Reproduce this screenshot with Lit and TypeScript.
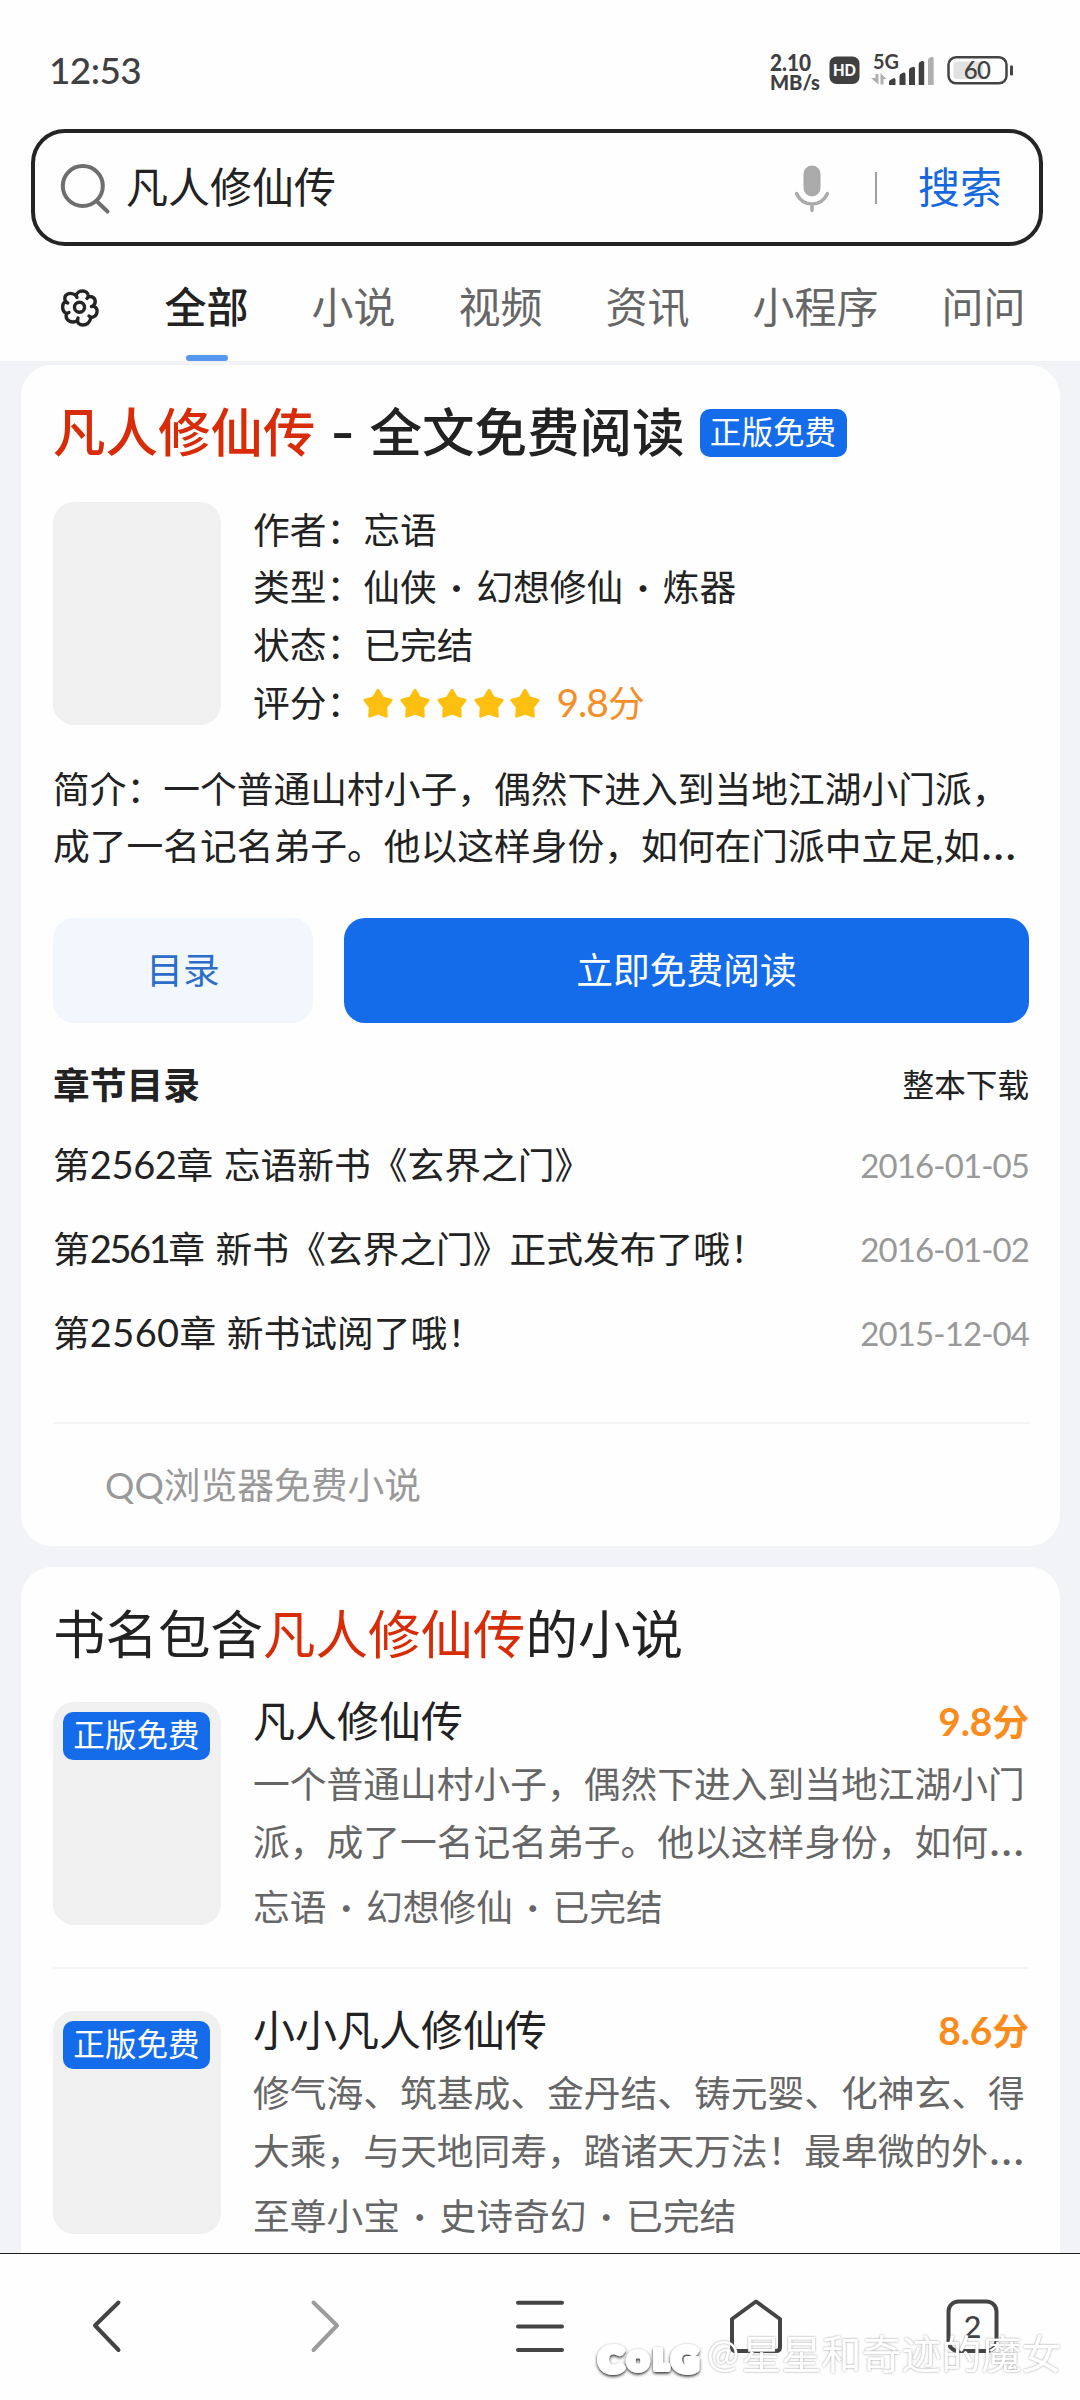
import { LitElement, html, svg, css } from "lit";
import { customElement, property } from "lit/decorators.js";

interface Chapter {
  no: string;
  tracking: number;
  title: string;
  date: string;
}

interface Book {
  title: string;
  score: string;
  lines: [string, string];
  meta: string[];
}

const tabs = ["全部", "小说", "视频", "资讯", "小程序", "问问"];

const chapters: Chapter[] = [
  { no: "2562", tracking: -0.35, title: "忘语新书《玄界之门》", date: "2016-01-05" },
  { no: "2561", tracking: -2.4, title: "新书《玄界之门》正式发布了哦！", date: "2016-01-02" },
  { no: "2560", tracking: 0.4, title: "新书试阅了哦！", date: "2015-12-04" },
];

const books: Book[] = [
  {
    title: "凡人修仙传",
    score: "9.8",
    lines: ["一个普通山村小子，偶然下进入到当地江湖小门", "派，成了一名记名弟子。他以这样身份，如何"],
    meta: ["忘语", "幻想修仙", "已完结"],
  },
  {
    title: "小小凡人修仙传",
    score: "8.6",
    lines: ["修气海、筑基成、金丹结、铸元婴、化神玄、得", "大乘，与天地同寿，踏诸天万法！最卑微的外"],
    meta: ["至尊小宝", "史诗奇幻", "已完结"],
  },
];

@customElement("free-badge")
export class FreeBadge extends LitElement {
  static styles = css`
    :host {
      display: block;
      box-sizing: border-box;
      width: 147px;
      height: 48px;
      border-radius: 10px;
      background: #146cea;
      color: #fff;
      font-size: 31.6px;
      font-weight: 400;
      line-height: 46px;
      text-align: center;
      white-space: nowrap;
    }
  `;
  render() {
    return html`正版免费`;
  }
}

@customElement("dotted-list")
export class DottedList extends LitElement {
  @property({ attribute: false }) items: string[] = [];
  static styles = css`
    :host {
      display: inline-flex;
    }
    .dot {
      width: 39.5px;
      font-family: "Noto Sans CJK SC", sans-serif;
      font-size: 32px;
      text-align: center;
    }
  `;
  render() {
    return this.items.map((item, i) => html`${i ? html`<span class="dot">·</span>` : ""}<span>${item}</span>`);
  }
}

@customElement("app-root")
export class AppRoot extends LitElement {
  static styles = css`
    :host {
      display: flex;
      flex-direction: column;
      position: relative;
      width: 1080px;
      height: 2400px;
      overflow: hidden;
      background: #fefefe;
      color: #222;
      font-family: Lato, "Noto Sans CJK SC", sans-serif;
      font-size: 36.75px;
      line-height: 58px;
      white-space: nowrap;
      text-spacing-trim: space-all;
    }
    * {
      box-sizing: border-box;
    }
    svg {
      display: block;
      flex: none;
    }
    .status {
      display: flex;
      justify-content: space-between;
      height: 129px;
      padding: 0 64px 0 49px;
      color: #404040;
    }
    .time {
      padding-top: 41px;
      font-size: 37px;
      font-weight: 500;
      letter-spacing: -0.6px;
    }
    .search {
      display: flex;
      align-items: center;
      flex: none;
      width: 1012px;
      height: 117px;
      margin-left: 31px;
      padding-left: 25px;
      border: 4px solid #242424;
      border-radius: 34px;
      font-size: 42px;
    }
    .query {
      width: 682px;
      padding: 0 0 2px 14px;
    }
    .rule {
      width: 2px;
      height: 32px;
      margin: 0 41px 0 45px;
      background: #a0a0a0;
    }
    .go {
      padding-bottom: 2px;
      color: #1768dc;
    }
    .tabs {
      display: flex;
      gap: 63px;
      flex: none;
      height: 115px;
      padding: 32px 0 0 60px;
      color: #666;
      font-size: 42px;
    }
    .gear {
      width: 41.5px;
      padding-top: 10px;
    }
    .tab {
      display: flex;
      flex-direction: column;
      align-items: center;
    }
    .tab.on {
      color: #222;
      font-weight: 500;
    }
    .tab.on::after {
      content: "";
      width: 42px;
      height: 6px;
      margin-top: 19px;
      border-radius: 3px;
      background: #5698f0;
    }
    .feed {
      display: flex;
      flex-direction: column;
      gap: 21px;
      flex: none;
      height: 1892px;
      padding: 3px 20px 0 21px;
      overflow: hidden;
      background: #f2f3f7;
      border-top: 1px solid #eef0f3;
    }
    .card {
      flex: none;
      padding: 0 31px 0 32px;
      border-radius: 31px;
      background: #fefefe;
    }
    .first {
      height: 1181px;
    }
    .second {
      height: 760px;
    }
    .heading {
      display: flex;
      height: 136.5px;
      padding-top: 37px;
      font-size: 52.5px;
      line-height: 60px;
    }
    .second .heading {
      height: 134.5px;
    }
    .strong {
      font-weight: 500;
    }
    .hit {
      color: #d82c08;
    }
    .dash {
      width: 54px;
      padding-top: 1px;
      font-family: Inter, sans-serif;
      font-weight: 500;
      text-align: center;
    }
    .heading free-badge {
      margin: 7px 0 0 15px;
    }
    .summary {
      display: flex;
      gap: 32px;
      height: 223px;
    }
    .cover {
      flex: none;
      width: 168px;
      height: 223px;
      padding: 10px;
      border-radius: 21px;
      background: #f0f0f0;
    }
    .facts {
      line-height: 57.8px;
    }
    .fact {
      display: flex;
      align-items: center;
      height: 57.8px;
    }
    .stars {
      display: flex;
      gap: 6.8px;
    }
    .score {
      padding-left: 16px;
      color: #f28f2a;
    }
    .digits {
      font-size: 39px;
      letter-spacing: -1px;
    }
    .intro {
      padding-top: 36px;
      line-height: 57.7px;
    }
    .dots {
      padding-left: 1px;
      font-size: 47px;
      line-height: 1px;
    }
    .actions {
      display: flex;
      gap: 31px;
      padding-top: 42px;
      line-height: 105px;
      text-align: center;
    }
    .toc {
      width: 260px;
      height: 105px;
      border-radius: 21px;
      background: #f2f7fe;
      color: #2b6dc8;
    }
    .read {
      flex: 1;
      height: 105px;
      border-radius: 21px;
      background: #146cea;
      color: #fff;
    }
    .between {
      display: flex;
      justify-content: space-between;
    }
    .section {
      height: 92px;
      padding-top: 33px;
    }
    .section b {
      font-weight: 700;
    }
    .download {
      font-size: 31.6px;
    }
    .chapters {
      height: 307px;
      padding-top: 8px;
      line-height: 84px;
    }
    .chapter {
      height: 84px;
    }
    .num {
      font-size: 38px;
      line-height: 1;
    }
    .title {
      padding-left: 10.5px;
    }
    .date {
      color: #999;
      font-size: 33px;
      letter-spacing: -0.9px;
    }
    .source {
      padding: 32px 0 0 52px;
      border-top: 2px solid #f3f4f5;
      color: #999;
    }
    .book {
      display: flex;
      gap: 32px;
    }
    .book + .book {
      margin-top: 42px;
      padding-top: 42px;
      border-top: 2px solid #f3f4f5;
    }
    .detail {
      flex: 1;
      height: 223px;
      color: #666;
    }
    .name {
      height: 53px;
      color: #222;
      font-size: 42px;
      line-height: 38px;
    }
    .rating {
      color: #fa8c1e;
      font-size: 36.8px;
      font-weight: 700;
    }
    .rating .digits {
      letter-spacing: -0.2px;
    }
    .meta {
      margin-top: 7px;
    }
    .nav {
      display: grid;
      grid-template-columns: repeat(5, 216px);
      flex: none;
      height: 147px;
      border-top: 1px solid #1c1c1c;
      background: #fefefe;
    }
    .watermark {
      position: absolute;
      left: 589px;
      top: 2320px;
    }
  `;

  private statusIcons() {
    return svg`
      <g fill="#404040" font-family="Lato" font-weight="700">
        <text x="10" y="70.500" font-size="22.5" textLength="41" lengthAdjust="spacingAndGlyphs" font-weight="900">2.10</text>
        <text x="10" y="89.5" font-size="21" textLength="50" lengthAdjust="spacingAndGlyphs" font-weight="900">MB/s</text>
        <rect x="69.500" y="56.500" width="30" height="27.500" rx="7"/>
        <text x="73" y="76.300" font-size="17" fill="#fff" font-weight="900" textLength="23" lengthAdjust="spacingAndGlyphs">HD</text>
        <text x="113" y="68.500" font-size="20.500" textLength="26" lengthAdjust="spacingAndGlyphs">5G</text>
        <path d="M129 85v-3q0-2 2-2.500l2.500-1.200q2-.6 2 1.500V85zM139.500 85v-9q0-2 2-2.600l2-.8q2-.4 2 1.500V85zM149 85V70q0-2 2-2.500l2-.6q2-.3 2 1.500V85zM158.700 85V64q0-2 2-2.500l1.500-.5q2-.3 2 1.500V85z"/>
        <path fill="#b0b0b0" d="M168 85V60q0-2 2-2.500l1.700-.6q2-.3 2 1.500V85zM115.500 74h3v10.500l-7.500-6.500h4.500zM120.500 84.500h3V79h3l-6-6z"/>
      </g>
      <rect x="188.500" y="57.300" width="58" height="26" rx="7.500" fill="none" stroke="#444" stroke-width="2.500"/>
      <path d="M197 61.500h26v17.500h-26q-3.500 0-3.500-3.500V65q0-3.500 3.500-3.500z" fill="#e2e2e2"/>
      <rect x="250" y="65.500" width="3" height="10" rx="1" fill="#444"/>
      <text x="203.800" y="78.500" font-family="Lato" font-size="24" font-weight="500" fill="#404040" textLength="27">60</text>
    `;
  }

  private cover() {
    return html`<div class="cover"><free-badge></free-badge></div>`;
  }

  private star() {
    return html`<svg width="30" height="32" viewBox="0 0 30 32">
      <path d="M15 2.400L19.600 10L28 12.300L22.700 19L23.300 28.200L15 25L6.700 28.200L7.300 19L2 12.300L10.400 10z" fill="#fdc010" stroke="#fdc010" stroke-width="3" stroke-linejoin="round"/>
    </svg>`;
  }

  private icon(shape: unknown, color = "#444") {
    return html`<svg width="216" height="147" viewBox="0 0 216 147" fill="none" stroke=${color} stroke-width="4" stroke-linecap="round" stroke-linejoin="round">${shape}</svg>`;
  }

  render() {
    return html`
      <header class="status">
        <div class="time">12:53</div>
        <svg width="256" height="120" viewBox="0 0 256 120">${this.statusIcons()}</svg>
      </header>

      <div class="search">
        <svg width="52" height="56" viewBox="0 0 52 56" fill="none" stroke="#6e6e6e" stroke-width="4" stroke-linecap="round">
          <circle cx="22.800" cy="26" r="20"/>
          <path d="M37 41.500L47.500 51.500"/>
        </svg>
        <div class="query">凡人修仙传</div>
        <svg width="36" height="50" viewBox="0 0 36 50">
          <rect x="9.500" y="2.500" width="17" height="31" rx="8.500" fill="#aaa"/>
          <path d="M2.500 30.500q5 10.500 15.500 10.500t15.500-10.500M18 41v6.500" fill="none" stroke="#aaa" stroke-width="3.500" stroke-linecap="round"/>
        </svg>
        <div class="rule"></div>
        <div class="go">搜索</div>
      </div>

      <nav class="tabs">
        <div class="gear">
          <svg width="40" height="40" viewBox="0 0 40 40" fill="none" stroke="#242424" stroke-width="3.400" stroke-linejoin="round" stroke-linecap="round">
            <path d="M16 7.500C17.500 1.500 28 1 28.500 8.500C35 8 37 13 33.500 18C39.500 21 37.500 29 31 29.500C30 32.500 29 37 23 37C19 37 17.500 34.500 17.500 32.500C12 36 4.500 32.500 6.500 25.500C1 22.500 2 15.500 5.500 13.500C2.500 5.500 11 3.500 16 7.500Z"/>
            <path d="M16 7.500l1 2M28.500 8.500l-1.500 2M33.500 18l-2 .5M31 29.500l-2-1.500M17.500 32.500l.5-2.500M6.500 25.500l2.500-1M5.500 13.500l2.200 1.500"/>
            <circle cx="19.500" cy="19.300" r="5"/>
          </svg>
        </div>
        ${tabs.map((t, i) => html`<div class="tab ${i === 0 ? "on" : ""}">${t}</div>`)}
      </nav>

      <main class="feed">
        <section class="card first">
          <div class="heading strong">
            <span class="hit">凡人修仙传</span><span class="dash">-</span><span>全文免费阅读</span>
            <free-badge></free-badge>
          </div>
          <div class="summary">
            <div class="cover"></div>
            <div class="facts">
              <div class="fact">作者：忘语</div>
              <div class="fact">类型：<dotted-list .items=${["仙侠", "幻想修仙", "炼器"]}></dotted-list></div>
              <div class="fact">状态：已完结</div>
              <div class="fact">
                评分：
                <div class="stars">${[1, 2, 3, 4, 5].map(() => this.star())}</div>
                <div class="score"><span class="digits">9.8</span>分</div>
              </div>
            </div>
          </div>
          <div class="intro">
            <div>简介：一个普通山村小子，偶然下进入到当地江湖小门派，</div>
            <div>成了一名记名弟子。他以这样身份，如何在门派中立足,如<span class="dots">…</span></div>
          </div>
          <div class="actions">
            <div class="toc">目录</div>
            <div class="read">立即免费阅读</div>
          </div>
          <div class="between section"><b>章节目录</b><span class="download">整本下载</span></div>
          <div class="chapters">
            ${chapters.map(
              (c) => html`<div class="between chapter">
                <div>第<span class="num" style="letter-spacing:${c.tracking}px">${c.no}</span>章<span class="title">${c.title}</span></div>
                <div class="date">${c.date}</div>
              </div>`
            )}
          </div>
          <div class="source">QQ浏览器免费小说</div>
        </section>

        <section class="card second">
          <div class="heading"><span>书名包含</span><span class="hit">凡人修仙传</span><span>的小说</span></div>
          ${books.map(
            (b) => html`<article class="book">
              ${this.cover()}
              <div class="detail">
                <div class="between name">
                  <span>${b.title}</span>
                  <span class="rating"><span class="digits">${b.score}</span>分</span>
                </div>
                <div>${b.lines[0]}</div>
                <div>${b.lines[1]}<span class="dots">…</span></div>
                <div class="meta"><dotted-list .items=${b.meta}></dotted-list></div>
              </div>
            </article>`
          )}
        </section>
      </main>

      <nav class="nav">
        ${this.icon(svg`<path d="M118.500 48.500L95 71.500l23.500 24.500"/>`)}
        ${this.icon(svg`<path d="M97.500 48.500L121 71.500L97.500 96"/>`, "#9c9c9c")}
        ${this.icon(svg`<path d="M86 48.700h44M86 72.400h44M86 96h44"/>`)}
        ${this.icon(svg`<path d="M108 47.500L84 65v28q0 4 4 4h40q4 0 4-4V65z"/>`)}
        ${this.icon(svg`<rect x="84.500" y="47.500" width="48" height="49.500" rx="10"/>
          <text x="108.500" y="83.500" text-anchor="middle" font-family="Lato" font-size="31" font-weight="500" fill="#444" stroke="none">2</text>`)}
      </nav>

      <svg class="watermark" width="490" height="72" viewBox="0 0 490 72">
        <defs>
          <filter id="soft" x="-10%" y="-20%" width="120%" height="150%">
            <feDropShadow dx="0" dy="1.500" stdDeviation="1.500" flood-color="#222" flood-opacity="1"/>
          </filter>
          <filter id="faint" x="-5%" y="-20%" width="110%" height="140%">
            <feDropShadow dx="0" dy="0" stdDeviation="1.100" flood-color="#777" flood-opacity="0.750"/>
          </filter>
        </defs>
        <g filter="url(#soft)" font-family="Lato" font-weight="900" fill="#fff" stroke="#fff" stroke-width="6" stroke-linejoin="round">
          <text x="10" y="52" font-size="34" textLength="24" lengthAdjust="spacingAndGlyphs">C</text>
          <text x="39" y="50" font-size="24" textLength="20" lengthAdjust="spacingAndGlyphs">O</text>
          <text x="65" y="49" font-size="27" textLength="14" lengthAdjust="spacingAndGlyphs">L</text>
          <text x="83" y="52" font-size="34" textLength="26" lengthAdjust="spacingAndGlyphs">G</text>
        </g>
        <g filter="url(#faint)" fill="#fff" font-family="Lato, 'Noto Sans CJK SC', sans-serif" font-size="40">
          <text x="118" y="47" font-size="38" textLength="32" lengthAdjust="spacingAndGlyphs">@</text>
          <text x="152.500" y="49">星星和奇迹的魔女</text>
        </g>
      </svg>
    `;
  }
}
